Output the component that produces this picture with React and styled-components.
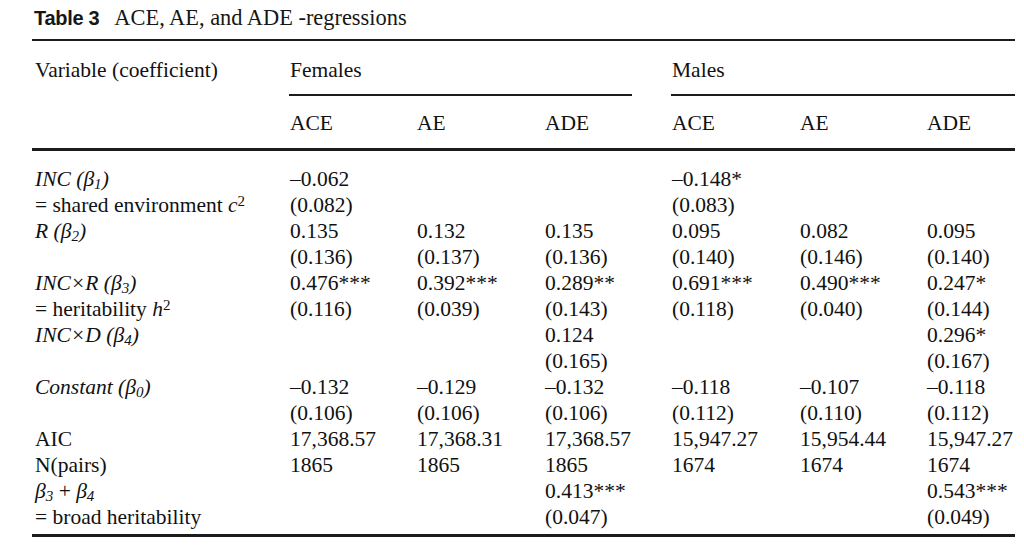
import React from "react";
import styled, { createGlobalStyle } from "styled-components";

const GlobalStyle = createGlobalStyle`
  html, body {
    margin: 0;
    padding: 0;
    background: #ffffff;
  }
  body {
    font-family: "Liberation Serif", "Times New Roman", serif;
    color: #111111;
  }
`;

const COLS = "257px 127px 128px 127px 128px 127px 89px";

const Page = styled.div`
  width: 983px;
  padding: 5px 0 0 32px;
  font-size: 21.5px;
  line-height: 26px;
`;

const Caption = styled.div`
  display: flex;
  align-items: baseline;
  gap: 15px;
  height: 26px;
  padding-left: 2px;
`;

const CaptionLabel = styled.span`
  font-family: "Liberation Sans", Arial, sans-serif;
  font-weight: 700;
  font-size: 20px;
  letter-spacing: -0.3px;
  color: #161616;
`;

const CaptionText = styled.span`
  font-family: "Liberation Serif", "Times New Roman", serif;
  font-size: 22.4px;
  color: #161616;
`;

const Rule = styled.div`
  margin-top: ${({ $gap }) => $gap}px;
  height: ${({ $weight }) => $weight}px;
  background: #1c1c1c;
`;

const Row = styled.div`
  display: grid;
  grid-template-columns: ${COLS};
  height: 26px;
  white-space: nowrap;
`;

const GroupRow = styled(Row)`
  margin-top: 16px;
  height: auto;
  align-items: start;
`;

const HeadRow = styled(Row)`
  margin-top: 14px;
`;

const Body = styled.div`
  margin-top: 15px;
`;

const Label = styled.div`
  padding-left: 3px;
`;

const Cell = styled.div`
  padding-left: 1px;
`;

const GroupCell = styled.div`
  grid-column: span 3;
  margin-right: ${({ $trim }) => $trim}px;
  padding-left: 1px;
  padding-bottom: 11px;
  border-bottom: 2px solid #1c1c1c;
`;

const Ital = styled.i`
  font-style: italic;
`;

const Sub = styled.sub`
  font-size: 0.7em;
  line-height: 0;
  vertical-align: -0.22em;
  font-style: italic;
`;

const Sup = styled.sup`
  font-size: 0.7em;
  line-height: 0;
  vertical-align: 0.42em;
`;

const rows = [
  {
    label: (
      <Ital>
        INC (β<Sub>1</Sub>)
      </Ital>
    ),
    cells: ["–0.062", "", "", "–0.148*", "", ""],
  },
  {
    label: (
      <>
        = shared environment <Ital>c</Ital>
        <Sup>2</Sup>
      </>
    ),
    cells: ["(0.082)", "", "", "(0.083)", "", ""],
  },
  {
    label: (
      <Ital>
        R (β<Sub>2</Sub>)
      </Ital>
    ),
    cells: ["0.135", "0.132", "0.135", "0.095", "0.082", "0.095"],
  },
  {
    label: "",
    cells: ["(0.136)", "(0.137)", "(0.136)", "(0.140)", "(0.146)", "(0.140)"],
  },
  {
    label: (
      <Ital>
        INC×R (β<Sub>3</Sub>)
      </Ital>
    ),
    cells: ["0.476***", "0.392***", "0.289**", "0.691***", "0.490***", "0.247*"],
  },
  {
    label: (
      <>
        = heritability <Ital>h</Ital>
        <Sup>2</Sup>
      </>
    ),
    cells: ["(0.116)", "(0.039)", "(0.143)", "(0.118)", "(0.040)", "(0.144)"],
  },
  {
    label: (
      <Ital>
        INC×D (β<Sub>4</Sub>)
      </Ital>
    ),
    cells: ["", "", "0.124", "", "", "0.296*"],
  },
  {
    label: "",
    cells: ["", "", "(0.165)", "", "", "(0.167)"],
  },
  {
    label: (
      <Ital>
        Constant (β<Sub>0</Sub>)
      </Ital>
    ),
    cells: ["–0.132", "–0.129", "–0.132", "–0.118", "–0.107", "–0.118"],
  },
  {
    label: "",
    cells: ["(0.106)", "(0.106)", "(0.106)", "(0.112)", "(0.110)", "(0.112)"],
  },
  {
    label: "AIC",
    cells: ["17,368.57", "17,368.31", "17,368.57", "15,947.27", "15,954.44", "15,947.27"],
  },
  {
    label: "N(pairs)",
    cells: ["1865", "1865", "1865", "1674", "1674", "1674"],
  },
  {
    label: (
      <>
        <Ital>
          β<Sub>3</Sub>
        </Ital>{" "}
        +{" "}
        <Ital>
          β<Sub>4</Sub>
        </Ital>
      </>
    ),
    cells: ["", "", "0.413***", "", "", "0.543***"],
  },
  {
    label: "= broad heritability",
    cells: ["", "", "(0.047)", "", "", "(0.049)"],
  },
];

const models = ["ACE", "AE", "ADE", "ACE", "AE", "ADE"];

export default function App() {
  return (
    <>
      <GlobalStyle />
      <Page>
        <Caption>
          <CaptionLabel>Table 3</CaptionLabel>
          <CaptionText>ACE, AE, and ADE -regressions</CaptionText>
        </Caption>
        <Rule $weight={2} $gap={8} />

        <GroupRow>
          <Label>Variable (coefficient)</Label>
          <GroupCell $trim={39}>Females</GroupCell>
          <GroupCell $trim={0}>Males</GroupCell>
        </GroupRow>

        <HeadRow>
          <Label />
          {models.map((m, i) => (
            <Cell key={i}>{m}</Cell>
          ))}
        </HeadRow>
        <Rule $weight={3} $gap={12} />

        <Body>
          {rows.map((row, i) => (
            <Row key={i}>
              <Label>{row.label}</Label>
              {row.cells.map((c, j) => (
                <Cell key={j}>{c}</Cell>
              ))}
            </Row>
          ))}
        </Body>
        <Rule $weight={3} $gap={4} />
      </Page>
    </>
  );
}
